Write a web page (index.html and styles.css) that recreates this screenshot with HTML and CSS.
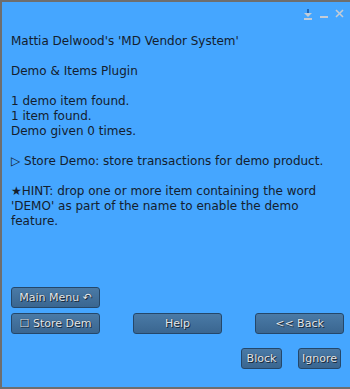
FILE: index.html
```html
<!DOCTYPE html>
<html lang="en">
<head>
    <meta charset="UTF-8">
    <title>MD Vendor System</title>
    <link rel="stylesheet" href="styles.css">
</head>
<body>
    <div class="dialog">
        <div class="titlebar">
            <svg class="tb-icon" width="10" height="11" viewBox="0 0 10 11">
                <rect x="4" y="0" width="2" height="5" fill="#1f66b8"/>
                <path d="M1 4 L9 4 L5 8 Z" fill="#c4ccd6"/>
                <rect x="1" y="9" width="8" height="2" fill="#c4ccd6"/>
            </svg>
            <svg class="tb-icon" width="8" height="11" viewBox="0 0 8 11">
                <rect x="0" y="7" width="8" height="2" fill="#c4ccd6"/>
            </svg>
            <svg class="tb-icon" width="9" height="11" viewBox="0 0 9 11">
                <path d="M1 1 L8 8 M8 1 L1 8" stroke="#c4ccd6" stroke-width="1.6"/>
            </svg>
        </div>

        <div class="message">
            <p>Mattia Delwood's 'MD Vendor System'</p>
            <p>Demo &amp; Items Plugin</p>
            <p>1 demo item found.<br>1 item found.<br>Demo given 0 times.</p>
            <p>&#9655; Store Demo: store transactions for demo product.</p>
            <p>&#9733;HINT: drop one or more item containing the word 'DEMO' as part of the name to enable the demo feature.</p>
        </div>

        <div class="buttons">
            <div class="btn-row">
                <button class="btn">Main Menu &#8630;</button>
            </div>
            <div class="btn-row spread">
                <button class="btn">&#9744; Store Dem</button>
                <button class="btn">Help</button>
                <button class="btn">&lt;&lt; Back</button>
            </div>
        </div>

        <div class="actions">
            <button class="btn block">Block</button>
            <button class="btn ignore">Ignore</button>
        </div>
    </div>
</body>
</html>
```

FILE: styles.css
```css
html, body {
    margin: 0;
    padding: 0;
}

body {
    background-color: #6e6e6e;
    font-family: "DejaVu Sans", sans-serif;
}

.dialog {
    width: 348px;
    height: 385px;
    margin-left: 2px;
    margin-top: 2px;
    background-color: #45a6ff;
    display: flex;
    flex-direction: column;
}

.titlebar {
    height: 32px;
    display: flex;
    justify-content: flex-end;
    align-items: flex-start;
    gap: 7px;
    padding-right: 6px;
    padding-top: 7px;
    box-sizing: border-box;
}

.message {
    padding: 0 9px;
    color: #14202e;
    font-size: 12px;
    line-height: 15px;
    flex: 1;
}

.message p {
    margin: 0 0 15px 0;
}

.buttons {
    padding: 0 6px 0 9px;
    display: flex;
    flex-direction: column;
    gap: 5px;
}

.btn-row {
    display: flex;
}

.btn-row.spread {
    justify-content: space-between;
}

.btn {
    width: 89px;
    height: 21px;
    padding: 0;
    font-family: "DejaVu Sans", sans-serif;
    font-size: 11px;
    color: #e4e8ec;
    text-shadow: 0 0 1px #1a2a3a, 1px 1px 0 #1a2a3a;
    background: linear-gradient(#4a7aa6, #3a6690);
    border: 1px solid #24476a;
    border-radius: 3px;
}

.actions {
    display: flex;
    justify-content: flex-end;
    gap: 16px;
    padding: 14px 9px 18px 0;
}

.btn.block {
    width: 41px;
}

.btn.ignore {
    width: 43px;
}
```
